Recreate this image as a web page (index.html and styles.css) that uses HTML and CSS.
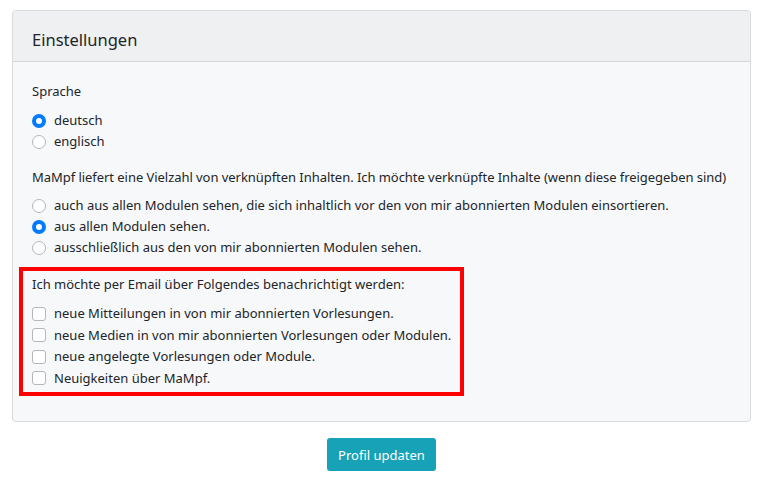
FILE: index.html
```html
<!DOCTYPE html>
<html lang="de">
  <head>
    <meta charset="UTF-8" />
    <meta name="viewport" content="width=device-width, initial-scale=1.0" />
    <title>Profil</title>
    <link rel="stylesheet" href="styles.css">
  </head>
  <body>
    <div class="card">
      <div class="card-header">Einstellungen</div>
      <div class="card-body">
        <div class="label">Sprache</div>
        <div class="options">
          <label class="option"><span class="radio checked"></span>deutsch</label>
          <label class="option"><span class="radio"></span>englisch</label>
        </div>

        <div class="label para">MaMpf liefert eine Vielzahl von verknüpften Inhalten. Ich möchte verknüpfte Inhalte (wenn diese freigegeben sind)</div>
        <div class="options">
          <label class="option"><span class="radio"></span>auch aus allen Modulen sehen, die sich inhaltlich vor den von mir abonnierten Modulen einsortieren.</label>
          <label class="option"><span class="radio checked"></span>aus allen Modulen sehen.</label>
          <label class="option"><span class="radio"></span>ausschließlich aus den von mir abonnierten Modulen sehen.</label>
        </div>

        <div class="highlight">
          <div class="label">Ich möchte per Email über Folgendes benachrichtigt werden:</div>
          <div class="options">
            <label class="option"><span class="check"></span>neue Mitteilungen in von mir abonnierten Vorlesungen.</label>
            <label class="option"><span class="check"></span>neue Medien in von mir abonnierten Vorlesungen oder Modulen.</label>
            <label class="option"><span class="check"></span>neue angelegte Vorlesungen oder Module.</label>
            <label class="option"><span class="check"></span>Neuigkeiten über MaMpf.</label>
          </div>
        </div>
      </div>
    </div>
    <div class="actions">
      <button class="btn">Profil updaten</button>
    </div>
  </body>
</html>
```

FILE: styles.css
```css
body {
  margin: 0;
  padding: 10px 12px 0;
  font-family: "Noto Sans", "Open Sans", sans-serif;
  font-size: 13px;
  line-height: 21px;
  color: #212529;
  background-color: #ffffff;
}

.card {
  border: 1px solid #d9dadc;
  border-radius: 4px;
  background-color: #f7f8fa;
}

.card-header {
  height: 51px;
  box-sizing: border-box;
  padding: 15px 19px 0;
  font-size: 16.5px;
  line-height: 28px;
  background-color: #eff0f2;
  border-bottom: 1px solid #d6d7d9;
  border-radius: 4px 4px 0 0;
}

.card-body {
  padding: 19px 19px 25px;
}

.label {
  margin-bottom: 8px;
  white-space: nowrap;
}

.para {
  margin-top: 15px;
  margin-bottom: 7px;
  letter-spacing: -0.05px;
}

.options {
  display: flex;
  flex-direction: column;
}

.option {
  display: flex;
  align-items: center;
  gap: 8px;
  height: 21px;
  white-space: nowrap;
}

.radio {
  width: 14px;
  height: 14px;
  box-sizing: border-box;
  border: 1px solid #b3b7bb;
  border-radius: 50%;
  background-color: #ffffff;
  flex-shrink: 0;
}

.radio.checked {
  border: 4.5px solid #007bff;
  background-color: #ffffff;
}

.check {
  width: 14px;
  height: 14px;
  box-sizing: border-box;
  border: 1px solid #b3b7bb;
  border-radius: 3px;
  background-color: #ffffff;
  flex-shrink: 0;
}

.highlight {
  margin: 9px 0 0 -13px;
  width: 445px;
  box-sizing: border-box;
  padding: 3px 9px 3px;
  border: 4px solid #ff0000;
}

.highlight .option {
  height: 21.5px;
}

.actions {
  display: flex;
  justify-content: center;
  margin-top: 16px;
}

.btn {
  font-family: inherit;
  font-size: 13px;
  height: 33px;
  padding: 0 11px;
  border: none;
  border-radius: 3px;
  background-color: #17a2b8;
  color: #ffffff;
}
```
